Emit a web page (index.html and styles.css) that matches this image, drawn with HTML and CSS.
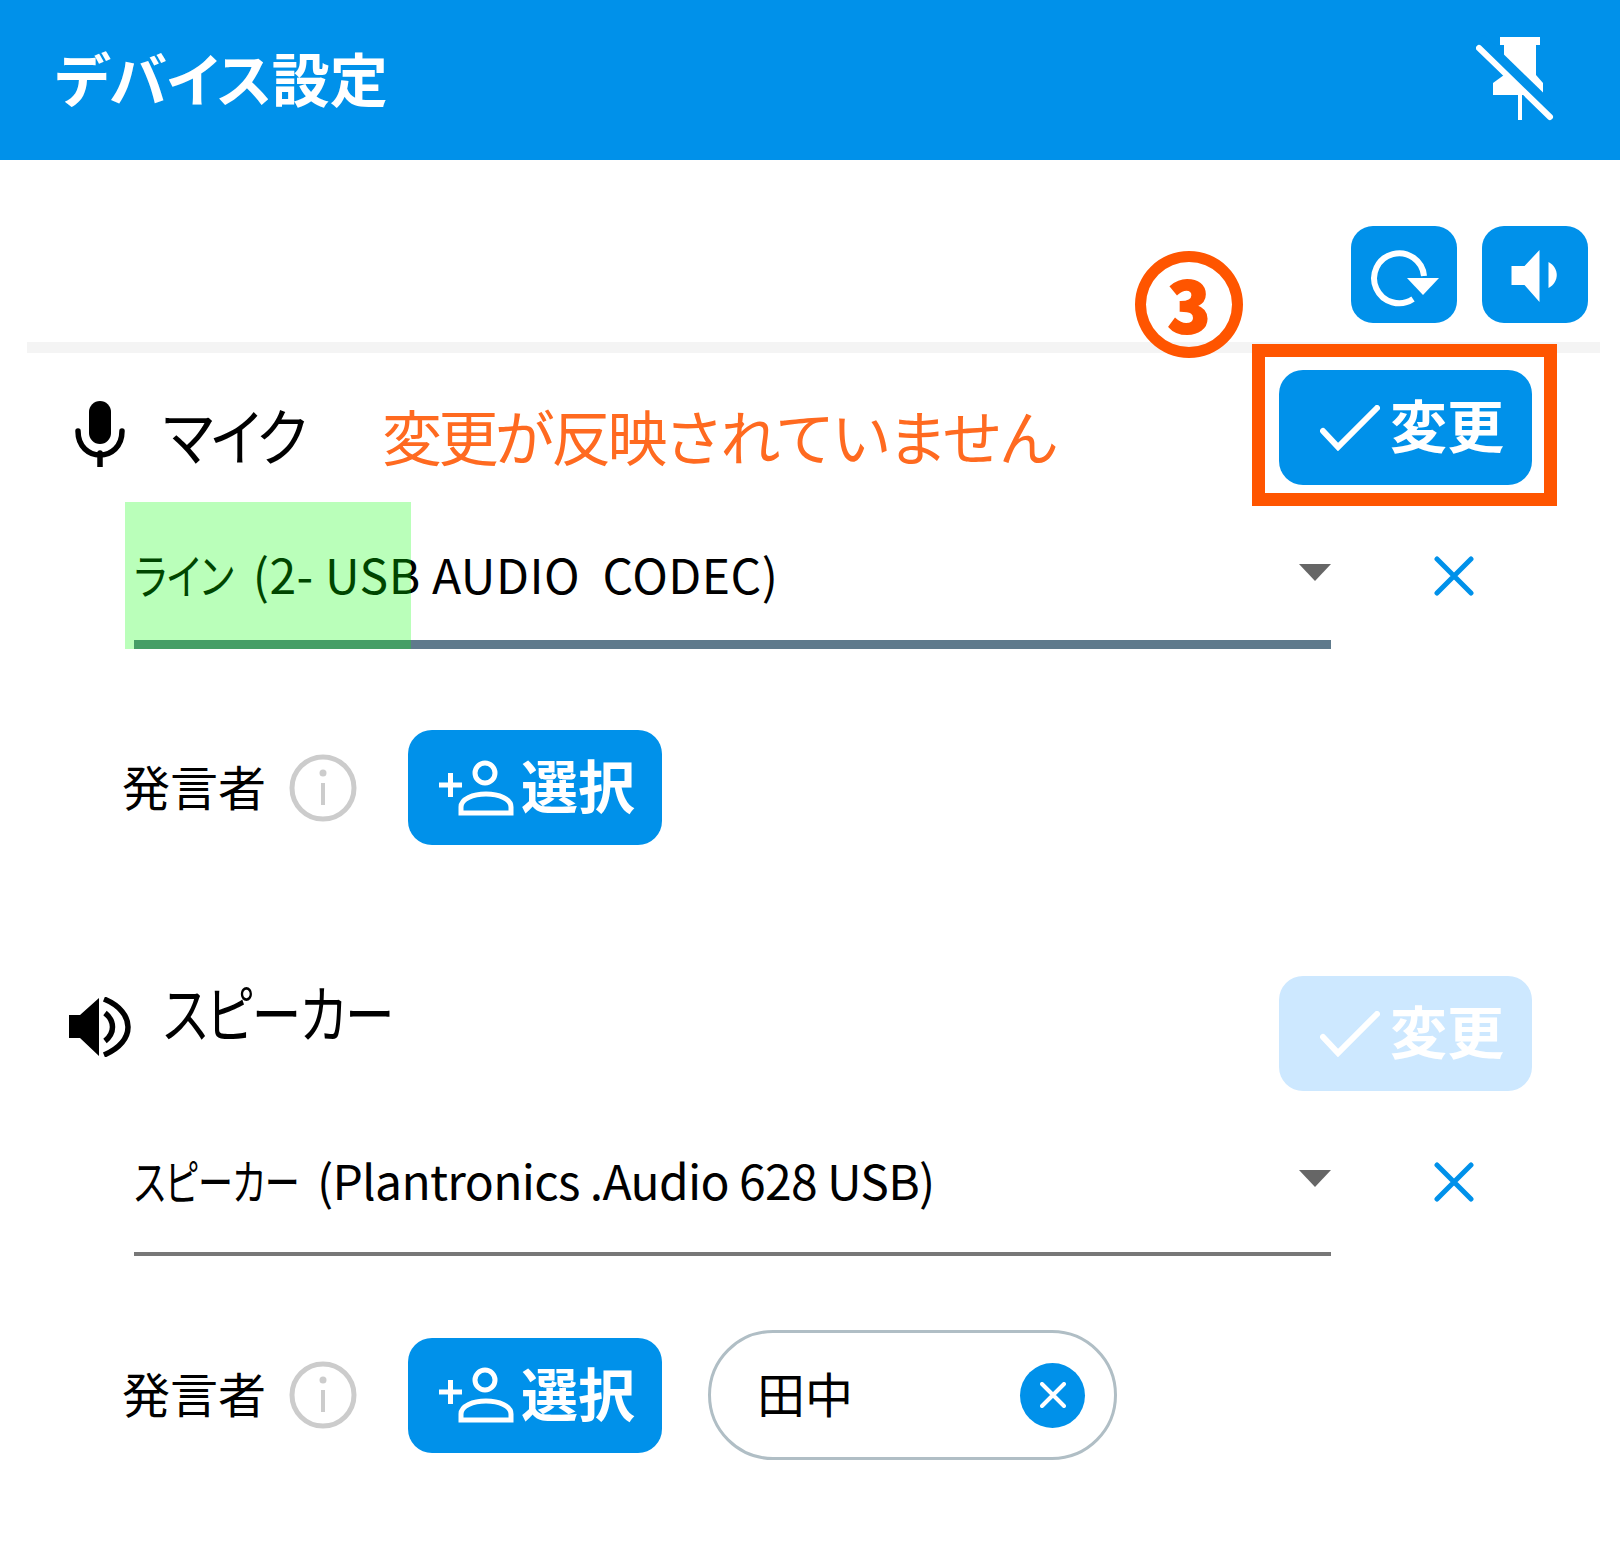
FILE: index.html
```html
<!DOCTYPE html>
<html lang="ja">
<head>
<meta charset="utf-8">
<title>デバイス設定</title>
<link rel="stylesheet" href="styles.css">
</head>
<body>
<div class="panel">
  <header class="titlebar">
    <h1 class="title">デバイス設定</h1>
    <svg class="pin" viewBox="0 0 80 90"><path class="w" d="M24 2H64V10H60V40L67 48V60H46V85H42V60H17V48L28 40V10H24Z"/><path class="gap" d="M3 5L74 74" stroke-width="14"/><path class="line" d="M3 13L74 82" stroke-width="6"/></svg>
  </header>

  <div class="toolbar">
    <button class="tool"><svg viewBox="0 0 106 97"><path class="arc" d="M73 50A25 25 0 1 0 62 73"/><path class="w" d="M56 52H88L72 69Z"/></svg></button>
    <button class="tool"><svg viewBox="0 0 105 97"><path class="w" d="M29 40H42L57 24V76L42 59H29Z"/><path class="w" d="M66 36C77 42 77 56 66 62Z"/></svg></button>
  </div>
  <div class="divider"></div>

  <section class="sec-mic">
    <div class="head">
      <span class="slot slot-mic"><svg viewBox="0 0 50 66"><rect x="14" y="0" width="22" height="43" rx="11"/><path class="blk" d="M3 30C3 62 47 62 47 30" /><path class="blk" d="M25 52V66"/></svg></span>
      <span class="name name-mic">マイク</span>
      <span class="warn">変更が反映されていません</span>
      <button class="apply"><svg viewBox="0 0 60 46"><path class="tick" d="M3 26L18 42L57 3"/></svg><span class="btn-text">変更</span></button>
    </div>
    <div class="field">
      <div class="select select-active">
        <span class="value value-mic"><span class="kana kana-line">ライン</span> (2- USB AUDIO&nbsp; CODEC)</span>
        <i class="caret"></i>
        <div class="level"></div>
      </div>
      <svg class="clear" viewBox="0 0 40 40"><path d="M3 3L37 37M37 3L3 37"/></svg>
    </div>
    <div class="speakers">
      <span class="label">発言者</span>
      <svg class="info" viewBox="0 0 68 68"><circle cx="34" cy="34" r="31"/><circle class="dot" cx="34" cy="19" r="3.500"/><path d="M34 29V51"/></svg>
      <button class="pick"><svg viewBox="0 0 80 58"><path class="ps" d="M2 26H25M13.500 14V38"/><circle class="ps" cx="48" cy="14" r="10"/><path class="ps" d="M24 54V48C24 40 36 35 49 35C62 35 74 40 74 48V54Z"/></svg><span class="btn-text">選択</span></button>
    </div>
  </section>

  <section class="sec-spk">
    <div class="head">
      <span class="slot slot-spk"><svg viewBox="0 0 64 60"><path d="M1 18H12L31 1V59L12 41H1Z"/><path class="blk2" d="M37 16C47 24 47 36 37 44"/><path class="blk2" d="M36 2C68 15 68 45 36 58"/></svg></span>
      <span class="name name-spk">スピーカー</span>
      <button class="apply apply-off"><svg viewBox="0 0 60 46"><path class="tick" d="M3 26L18 42L57 3"/></svg><span class="btn-text">変更</span></button>
    </div>
    <div class="field">
      <div class="select">
        <span class="value value-spk"><span class="kana kana-spk">スピーカー</span> (Plantronics .Audio 628 USB)</span>
        <i class="caret"></i>
      </div>
      <svg class="clear" viewBox="0 0 40 40"><path d="M3 3L37 37M37 3L3 37"/></svg>
    </div>
    <div class="speakers speakers-chip">
      <span class="label">発言者</span>
      <svg class="info" viewBox="0 0 68 68"><circle cx="34" cy="34" r="31"/><circle class="dot" cx="34" cy="19" r="3.500"/><path d="M34 29V51"/></svg>
      <button class="pick"><svg viewBox="0 0 80 58"><path class="ps" d="M2 26H25M13.500 14V38"/><circle class="ps" cx="48" cy="14" r="10"/><path class="ps" d="M24 54V48C24 40 36 35 49 35C62 35 74 40 74 48V54Z"/></svg><span class="btn-text">選択</span></button>
      <div class="chip">
        <span class="chip-name">田中</span>
        <span class="chip-x"><svg viewBox="0 0 26 26"><path d="M2 2L24 24M24 2L2 24"/></svg></span>
      </div>
    </div>
  </section>

  <div class="callout-num">3</div>
  <div class="callout-box"></div>
</div>
</body>
</html>
```
FILE: styles.css
```css
* { box-sizing: border-box; }
html, body { margin: 0; background: #fff; }
body { font-family: "Noto Sans CJK JP", "Noto Sans", sans-serif; color: #000; }
.panel { position: relative; width: 1620px; height: 1551px; overflow: hidden; }
button { font: inherit; border: 0; padding: 0; color: #fff; background: #0091ea; }
svg { display: block; }

.titlebar { height: 160px; background: #0091ea; display: flex; align-items: center; justify-content: space-between; padding: 0 64px 0 55px; }
.title { margin: 0 0 6px; color: #fff; font-size: 58px; font-weight: 700; line-height: 1; font-feature-settings: "palt"; }
.pin { width: 80px; height: 90px; margin-top: -1px; }
.w { fill: #fff; }
.gap { stroke: #0091ea; fill: none; }
.line { stroke: #fff; fill: none; stroke-linecap: round; }

.toolbar { display: flex; justify-content: flex-end; gap: 25px; padding: 66px 32px 0 0; }
.tool { width: 106px; height: 97px; border-radius: 22px; }
.tool svg { width: 100%; height: 100%; }
.arc { fill: none; stroke: #fff; stroke-width: 6; }
.divider { height: 11px; margin: 19px 20px 0 27px; background: #f4f4f4; }

.sec-mic { padding-top: 17px; }
.sec-spk { padding-top: 131px; }
.head { display: flex; align-items: flex-start; height: 115px; padding: 0 88px 0 68px; }
.slot { width: 64px; display: flex; justify-content: center; }
.slot-mic { margin-top: 31px; }
.slot-mic svg { width: 50px; height: 66px; }
.slot-spk { margin-top: 21px; }
.slot-spk svg { width: 64px; height: 60px; }
.blk { fill: none; stroke: #000; stroke-width: 5.500; stroke-linecap: round; }
.blk2 { fill: none; stroke: #000; stroke-width: 5.500; }
.name { margin-left: 31px; font-size: 62px; line-height: 1; font-feature-settings: "palt"; white-space: nowrap; transform-origin: left center; }
.name-mic { width: 144px; margin-top: 33px; letter-spacing: -3px; transform: scaleX(.91); }
.name-spk { width: 227px; margin-top: 4px; letter-spacing: -1px; transform: scaleX(.8); }
.warn { margin: 29px 0 0 75px; font-size: 60px; line-height: 1.200; color: #ff6a20; letter-spacing: -3.600px; }
.apply { margin-left: auto; width: 253px; height: 115px; border-radius: 24px; display: flex; align-items: center; gap: 10px; padding-left: 41px; font-size: 57px; font-weight: 700; line-height: 1; }
.apply svg { width: 60px; height: 46px; }
.btn-text { margin-bottom: 8px; }
.tick { fill: none; stroke: #fff; stroke-width: 6; stroke-linecap: round; }
.apply-off { background: #cde8ff; }

.field { display: flex; align-items: flex-start; margin-top: 17px; padding-left: 134px; }
.select { position: relative; width: 1197px; height: 148px; padding-top: 38px; border-bottom: 4px solid #777; display: flex; align-items: flex-start; justify-content: space-between; }
.select-active { height: 147px; border-bottom: 9px solid #5f7a8c; }
.value { font-size: 48px; line-height: 66px; font-feature-settings: "palt"; white-space: pre; }
.value-mic { letter-spacing: .5px; }
.value-spk { letter-spacing: -.7px; }
.kana { display: inline-block; letter-spacing: 0; transform-origin: left center; }
.kana-line { margin-right: -19px; transform: scaleX(.79); }
.kana-spk { margin-right: -54px; transform: scaleX(.73); }
.caret { width: 0; height: 0; margin-top: 24px; border-left: 16px solid transparent; border-right: 16px solid transparent; border-top: 17px solid #666; }
.level { position: absolute; left: -9px; top: 0; bottom: -9px; width: 286px; background: rgba(0, 255, 0, .27); }
.clear { width: 40px; height: 40px; margin: 54px 0 0 103px; }
.clear path { fill: none; stroke: #0091ea; stroke-width: 5; stroke-linecap: round; }

.speakers { display: flex; align-items: center; margin-top: 81px; padding-left: 122px; height: 115px; }
.speakers-chip { margin-top: 74px; height: 130px; }
.label { width: 167px; margin-bottom: 6px; font-size: 48px; line-height: 1; }
.info { width: 68px; height: 68px; }
.info circle { fill: none; stroke: #ccc; stroke-width: 5; }
.info .dot { fill: #ccc; stroke: none; }
.info path { fill: none; stroke: #ccc; stroke-width: 4; }
.pick { margin-left: 51px; width: 254px; height: 115px; border-radius: 24px; display: flex; align-items: center; gap: 4px; padding-left: 29px; font-size: 57px; font-weight: 700; line-height: 1; }
.pick svg { width: 80px; height: 58px; }
.ps { fill: none; stroke: #fff; stroke-width: 5; }
.chip { margin-left: 46px; width: 409px; height: 130px; border: 3px solid #b0bec5; border-radius: 65px; display: flex; align-items: center; justify-content: space-between; padding: 0 29px 0 46px; }
.chip-name { margin-bottom: 6px; font-size: 48px; line-height: 1; }
.chip-x { width: 65px; height: 65px; border-radius: 50%; background: #0091ea; display: flex; align-items: center; justify-content: center; }
.chip-x svg { width: 26px; height: 26px; }
.chip-x path { fill: none; stroke: #fff; stroke-width: 4; stroke-linecap: round; }

.callout-num { position: absolute; left: 1135px; top: 251px; width: 108px; height: 107px; border: 11px solid #ff5500; border-radius: 50%; display: flex; align-items: center; justify-content: center; color: #ff5500; font-size: 70px; font-weight: 900; line-height: 1; -webkit-text-stroke: 2px #ff5500; padding-bottom: 4px; }
.callout-box { position: absolute; left: 1252px; top: 344px; width: 305px; height: 162px; border: 13px solid #ff5500; }
```
